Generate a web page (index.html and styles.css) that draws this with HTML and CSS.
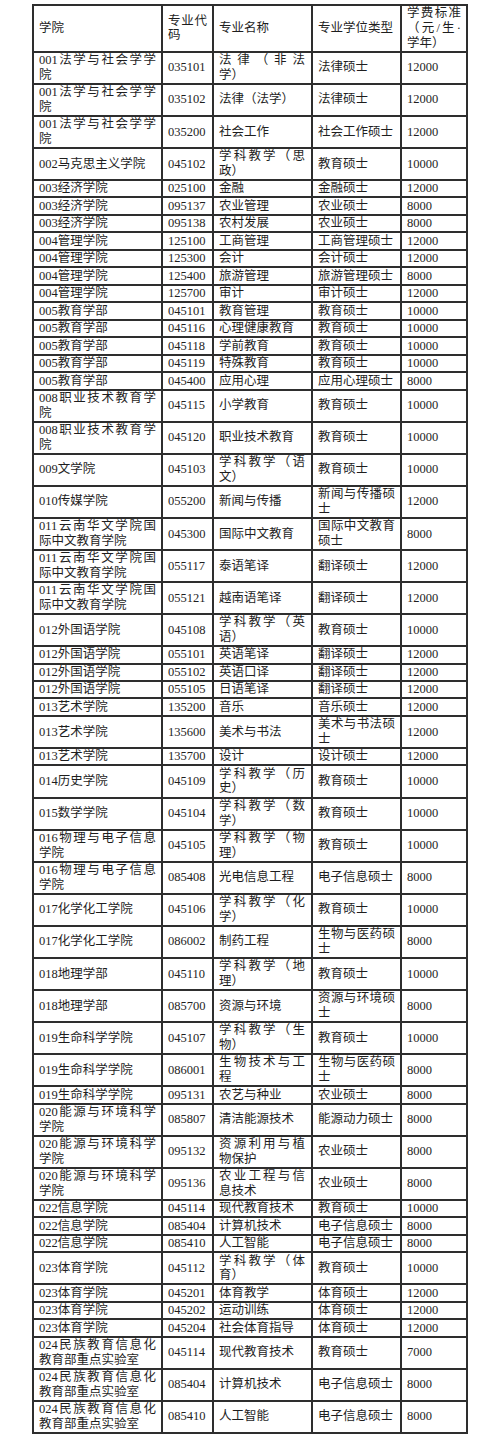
FILE: index.html
```html
<!DOCTYPE html>
<html lang="zh-CN">
<head>
<meta charset="utf-8">
<title>学费标准</title>
<link rel="stylesheet" href="styles.css">
</head>
<body>
<div class="page">
<table class="fees">
<colgroup>
<col class="c1"><col class="c2"><col class="c3"><col class="c4"><col class="c5">
</colgroup>
<thead>
<tr><th>学院</th><th>专业代码</th><th>专业名称</th><th>专业学位类型</th><th>学费标准（元/生·学年）</th></tr>
</thead>
<tbody>
<tr><td>001法学与社会学学院</td><td>035101</td><td>法律（非法学）</td><td>法律硕士</td><td>12000</td></tr>
<tr><td>001法学与社会学学院</td><td>035102</td><td>法律（法学）</td><td>法律硕士</td><td>12000</td></tr>
<tr><td>001法学与社会学学院</td><td>035200</td><td>社会工作</td><td>社会工作硕士</td><td>12000</td></tr>
<tr><td>002马克思主义学院</td><td>045102</td><td>学科教学（思政）</td><td>教育硕士</td><td>10000</td></tr>
<tr><td>003经济学院</td><td>025100</td><td>金融</td><td>金融硕士</td><td>12000</td></tr>
<tr><td>003经济学院</td><td>095137</td><td>农业管理</td><td>农业硕士</td><td>8000</td></tr>
<tr><td>003经济学院</td><td>095138</td><td>农村发展</td><td>农业硕士</td><td>8000</td></tr>
<tr><td>004管理学院</td><td>125100</td><td>工商管理</td><td>工商管理硕士</td><td>12000</td></tr>
<tr><td>004管理学院</td><td>125300</td><td>会计</td><td>会计硕士</td><td>12000</td></tr>
<tr><td>004管理学院</td><td>125400</td><td>旅游管理</td><td>旅游管理硕士</td><td>8000</td></tr>
<tr><td>004管理学院</td><td>125700</td><td>审计</td><td>审计硕士</td><td>12000</td></tr>
<tr><td>005教育学部</td><td>045101</td><td>教育管理</td><td>教育硕士</td><td>10000</td></tr>
<tr><td>005教育学部</td><td>045116</td><td>心理健康教育</td><td>教育硕士</td><td>10000</td></tr>
<tr><td>005教育学部</td><td>045118</td><td>学前教育</td><td>教育硕士</td><td>10000</td></tr>
<tr><td>005教育学部</td><td>045119</td><td>特殊教育</td><td>教育硕士</td><td>10000</td></tr>
<tr><td>005教育学部</td><td>045400</td><td>应用心理</td><td>应用心理硕士</td><td>8000</td></tr>
<tr><td>008职业技术教育学院</td><td>045115</td><td>小学教育</td><td>教育硕士</td><td>10000</td></tr>
<tr><td>008职业技术教育学院</td><td>045120</td><td>职业技术教育</td><td>教育硕士</td><td>10000</td></tr>
<tr><td>009文学院</td><td>045103</td><td>学科教学（语文）</td><td>教育硕士</td><td>10000</td></tr>
<tr><td>010传媒学院</td><td>055200</td><td>新闻与传播</td><td>新闻与传播硕士</td><td>12000</td></tr>
<tr><td>011云南华文学院国际中文教育学院</td><td>045300</td><td>国际中文教育</td><td>国际中文教育硕士</td><td>8000</td></tr>
<tr><td>011云南华文学院国际中文教育学院</td><td>055117</td><td>泰语笔译</td><td>翻译硕士</td><td>12000</td></tr>
<tr><td>011云南华文学院国际中文教育学院</td><td>055121</td><td>越南语笔译</td><td>翻译硕士</td><td>12000</td></tr>
<tr><td>012外国语学院</td><td>045108</td><td>学科教学（英语）</td><td>教育硕士</td><td>10000</td></tr>
<tr><td>012外国语学院</td><td>055101</td><td>英语笔译</td><td>翻译硕士</td><td>12000</td></tr>
<tr><td>012外国语学院</td><td>055102</td><td>英语口译</td><td>翻译硕士</td><td>12000</td></tr>
<tr><td>012外国语学院</td><td>055105</td><td>日语笔译</td><td>翻译硕士</td><td>12000</td></tr>
<tr><td>013艺术学院</td><td>135200</td><td>音乐</td><td>音乐硕士</td><td>12000</td></tr>
<tr><td>013艺术学院</td><td>135600</td><td>美术与书法</td><td>美术与书法硕士</td><td>12000</td></tr>
<tr><td>013艺术学院</td><td>135700</td><td>设计</td><td>设计硕士</td><td>12000</td></tr>
<tr><td>014历史学院</td><td>045109</td><td>学科教学（历史）</td><td>教育硕士</td><td>10000</td></tr>
<tr><td>015数学学院</td><td>045104</td><td>学科教学（数学）</td><td>教育硕士</td><td>10000</td></tr>
<tr><td>016物理与电子信息学院</td><td>045105</td><td>学科教学（物理）</td><td>教育硕士</td><td>10000</td></tr>
<tr><td>016物理与电子信息学院</td><td>085408</td><td>光电信息工程</td><td>电子信息硕士</td><td>8000</td></tr>
<tr><td>017化学化工学院</td><td>045106</td><td>学科教学（化学）</td><td>教育硕士</td><td>10000</td></tr>
<tr><td>017化学化工学院</td><td>086002</td><td>制药工程</td><td>生物与医药硕士</td><td>8000</td></tr>
<tr><td>018地理学部</td><td>045110</td><td>学科教学（地理）</td><td>教育硕士</td><td>10000</td></tr>
<tr><td>018地理学部</td><td>085700</td><td>资源与环境</td><td>资源与环境硕士</td><td>8000</td></tr>
<tr><td>019生命科学学院</td><td>045107</td><td>学科教学（生物）</td><td>教育硕士</td><td>10000</td></tr>
<tr><td>019生命科学学院</td><td>086001</td><td>生物技术与工程</td><td>生物与医药硕士</td><td>8000</td></tr>
<tr><td>019生命科学学院</td><td>095131</td><td>农艺与种业</td><td>农业硕士</td><td>8000</td></tr>
<tr><td>020能源与环境科学学院</td><td>085807</td><td>清洁能源技术</td><td>能源动力硕士</td><td>8000</td></tr>
<tr><td>020能源与环境科学学院</td><td>095132</td><td>资源利用与植物保护</td><td>农业硕士</td><td>8000</td></tr>
<tr><td>020能源与环境科学学院</td><td>095136</td><td>农业工程与信息技术</td><td>农业硕士</td><td>8000</td></tr>
<tr><td>022信息学院</td><td>045114</td><td>现代教育技术</td><td>教育硕士</td><td>10000</td></tr>
<tr><td>022信息学院</td><td>085404</td><td>计算机技术</td><td>电子信息硕士</td><td>8000</td></tr>
<tr><td>022信息学院</td><td>085410</td><td>人工智能</td><td>电子信息硕士</td><td>8000</td></tr>
<tr><td>023体育学院</td><td>045112</td><td>学科教学（体育）</td><td>教育硕士</td><td>10000</td></tr>
<tr><td>023体育学院</td><td>045201</td><td>体育教学</td><td>体育硕士</td><td>12000</td></tr>
<tr><td>023体育学院</td><td>045202</td><td>运动训练</td><td>体育硕士</td><td>12000</td></tr>
<tr><td>023体育学院</td><td>045204</td><td>社会体育指导</td><td>体育硕士</td><td>12000</td></tr>
<tr><td>024民族教育信息化教育部重点实验室</td><td>045114</td><td>现代教育技术</td><td>教育硕士</td><td>7000</td></tr>
<tr><td>024民族教育信息化教育部重点实验室</td><td>085404</td><td>计算机技术</td><td>电子信息硕士</td><td>8000</td></tr>
<tr><td>024民族教育信息化教育部重点实验室</td><td>085410</td><td>人工智能</td><td>电子信息硕士</td><td>8000</td></tr>
</tbody>
</table>
</div>
</body>
</html>
```
FILE: styles.css
```css
html, body {
  margin: 0;
  padding: 0;
  background: #ffffff;
}

.page {
  padding: 4px 0 0 32px;
}

.fees {
  border-collapse: collapse;
  table-layout: fixed;
  width: 434px;
  font-family: "Liberation Serif", "Noto Sans CJK SC", serif;
  font-size: 12.5px;
  line-height: 14.6px;
  color: #1e1e1e;
  text-spacing-trim: space-all;
}

.c1 { width: 129px; }
.c2 { width: 51px; }
.c3 { width: 99px; }
.c4 { width: 89px; }
.c5 { width: 66px; }

.fees th,
.fees td {
  border: 2px solid #2e2e2e;
  padding: 0.45px 5px;
  text-align: justify;
  vertical-align: middle;
  font-weight: normal;
  word-break: normal;
}

.fees td:nth-child(3) {
  padding-right: 6px;
}
```
